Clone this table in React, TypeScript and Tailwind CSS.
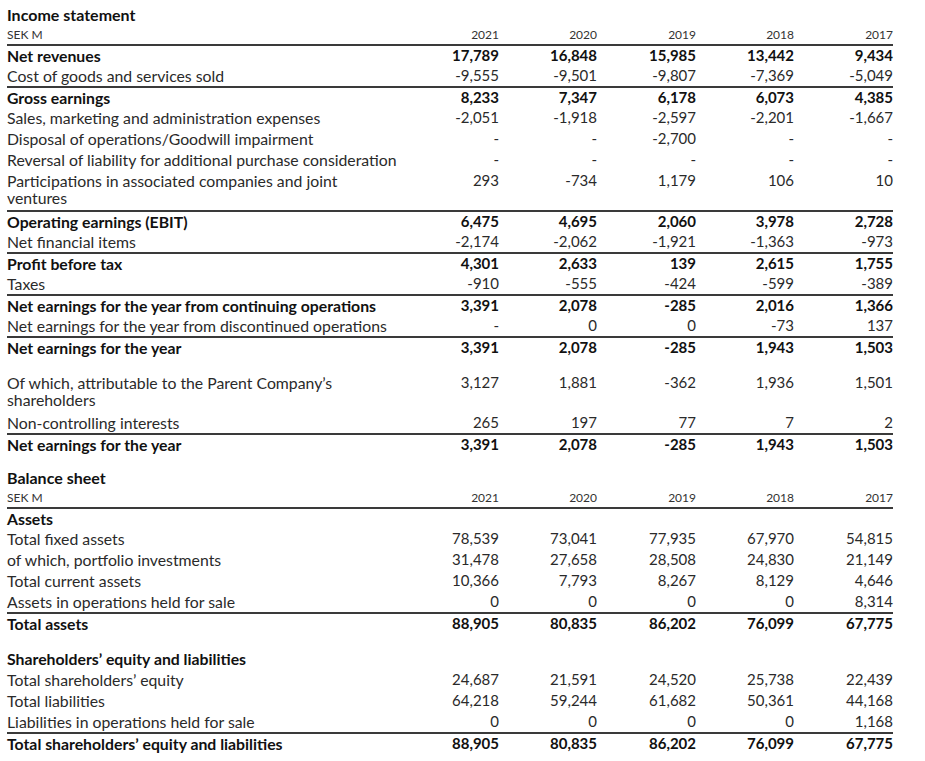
import React from 'react';

type Row = {
  label: string;
  values?: string[];
  bold?: boolean;
  line?: boolean;
  tall?: boolean;
};

const grid = 'grid grid-cols-[394px_98px_98px_99px_98px_99px]';

const income: Row[] = [
  { label: 'Net revenues', values: ['17,789', '16,848', '15,985', '13,442', '9,434'], bold: true, line: true },
  { label: 'Cost of goods and services sold', values: ['-9,555', '-9,501', '-9,807', '-7,369', '-5,049'] },
  { label: 'Gross earnings', values: ['8,233', '7,347', '6,178', '6,073', '4,385'], bold: true, line: true },
  { label: 'Sales, marketing and administration expenses', values: ['-2,051', '-1,918', '-2,597', '-2,201', '-1,667'] },
  { label: 'Disposal of operations/Goodwill impairment', values: ['-', '-', '-2,700', '-', '-'] },
  { label: 'Reversal of liability for additional purchase consideration', values: ['-', '-', '-', '-', '-'] },
  { label: 'Participations in associated companies and joint ventures', values: ['293', '-734', '1,179', '106', '10'], tall: true },
  { label: 'Operating earnings (EBIT)', values: ['6,475', '4,695', '2,060', '3,978', '2,728'], bold: true, line: true },
  { label: 'Net financial items', values: ['-2,174', '-2,062', '-1,921', '-1,363', '-973'] },
  { label: 'Profit before tax', values: ['4,301', '2,633', '139', '2,615', '1,755'], bold: true, line: true },
  { label: 'Taxes', values: ['-910', '-555', '-424', '-599', '-389'] },
  { label: 'Net earnings for the year from continuing operations', values: ['3,391', '2,078', '-285', '2,016', '1,366'], bold: true, line: true },
  { label: 'Net earnings for the year from discontinued operations', values: ['-', '0', '0', '-73', '137'] },
  { label: 'Net earnings for the year', values: ['3,391', '2,078', '-285', '1,943', '1,503'], bold: true, line: true },
];

const attributable: Row[] = [
  { label: 'Of which, attributable to the Parent Company\u2019s shareholders', values: ['3,127', '1,881', '-362', '1,936', '1,501'], tall: true },
  { label: 'Non-controlling interests', values: ['265', '197', '77', '7', '2'] },
  { label: 'Net earnings for the year', values: ['3,391', '2,078', '-285', '1,943', '1,503'], bold: true, line: true },
];

const assets: Row[] = [
  { label: 'Assets', bold: true, line: true },
  { label: 'Total fixed assets', values: ['78,539', '73,041', '77,935', '67,970', '54,815'] },
  { label: 'of which, portfolio investments', values: ['31,478', '27,658', '28,508', '24,830', '21,149'] },
  { label: 'Total current assets', values: ['10,366', '7,793', '8,267', '8,129', '4,646'] },
  { label: 'Assets in operations held for sale', values: ['0', '0', '0', '0', '8,314'] },
  { label: 'Total assets', values: ['88,905', '80,835', '86,202', '76,099', '67,775'], bold: true, line: true },
];

const equity: Row[] = [
  { label: 'Shareholders\u2019 equity and liabilities', bold: true },
  { label: 'Total shareholders\u2019 equity', values: ['24,687', '21,591', '24,520', '25,738', '22,439'] },
  { label: 'Total liabilities', values: ['64,218', '59,244', '61,682', '50,361', '44,168'] },
  { label: 'Liabilities in operations held for sale', values: ['0', '0', '0', '0', '1,168'] },
  { label: 'Total shareholders\u2019 equity and liabilities', values: ['88,905', '80,835', '86,202', '76,099', '67,775'], bold: true, line: true },
];

const years = ['2021', '2020', '2019', '2018', '2017'];

function TableRow({ row }: { row: Row }) {
  return (
    <div
      className={`${grid} ${row.tall ? 'h-[40px] pt-[2px]' : 'h-[21px] items-center'} ${
        row.line ? 'border-t-2 border-[#3a3a3a]' : ''
      } ${row.bold ? 'font-bold text-[#111]' : 'text-[#2a2a2a]'}`}
    >
      <div className={`text-[15.8px] leading-[17px] ${row.tall ? 'pr-[40px]' : 'whitespace-nowrap'}`}>{row.label}</div>
      {(row.values ?? ['', '', '', '', '']).map((v, i) => (
        <div key={i} className="text-right leading-[17px]">
          {v}
        </div>
      ))}
    </div>
  );
}

function Header({ title }: { title: string }) {
  return (
    <>
      <div className="h-[22px] flex items-center text-[16px] font-bold text-[#111]">{title}</div>
      <div className={`${grid} h-[18px] items-center text-[12px] text-[#333]`}>
        <div>SEK M</div>
        {years.map(y => (
          <div key={y} className="text-right">
            {y}
          </div>
        ))}
      </div>
    </>
  );
}

export default function App() {
  return (
    <div className="w-[925px] h-[761px] bg-white pl-[7px] pt-[4px] text-[15px] font-['Lato',sans-serif] overflow-hidden">
      <div className="w-[886px]">
        <Header title="Income statement" />
        {income.map((r, i) => (
          <TableRow key={i} row={r} />
        ))}
        <div className="h-[15px]" />
        {attributable.map((r, i) => (
          <TableRow key={i} row={r} />
        ))}
        <div className="h-[13px]" />
        <Header title="Balance sheet" />
        {assets.map((r, i) => (
          <TableRow key={i} row={r} />
        ))}
        <div className="h-[15px]" />
        {equity.map((r, i) => (
          <TableRow key={i} row={r} />
        ))}
      </div>
    </div>
  );
}
